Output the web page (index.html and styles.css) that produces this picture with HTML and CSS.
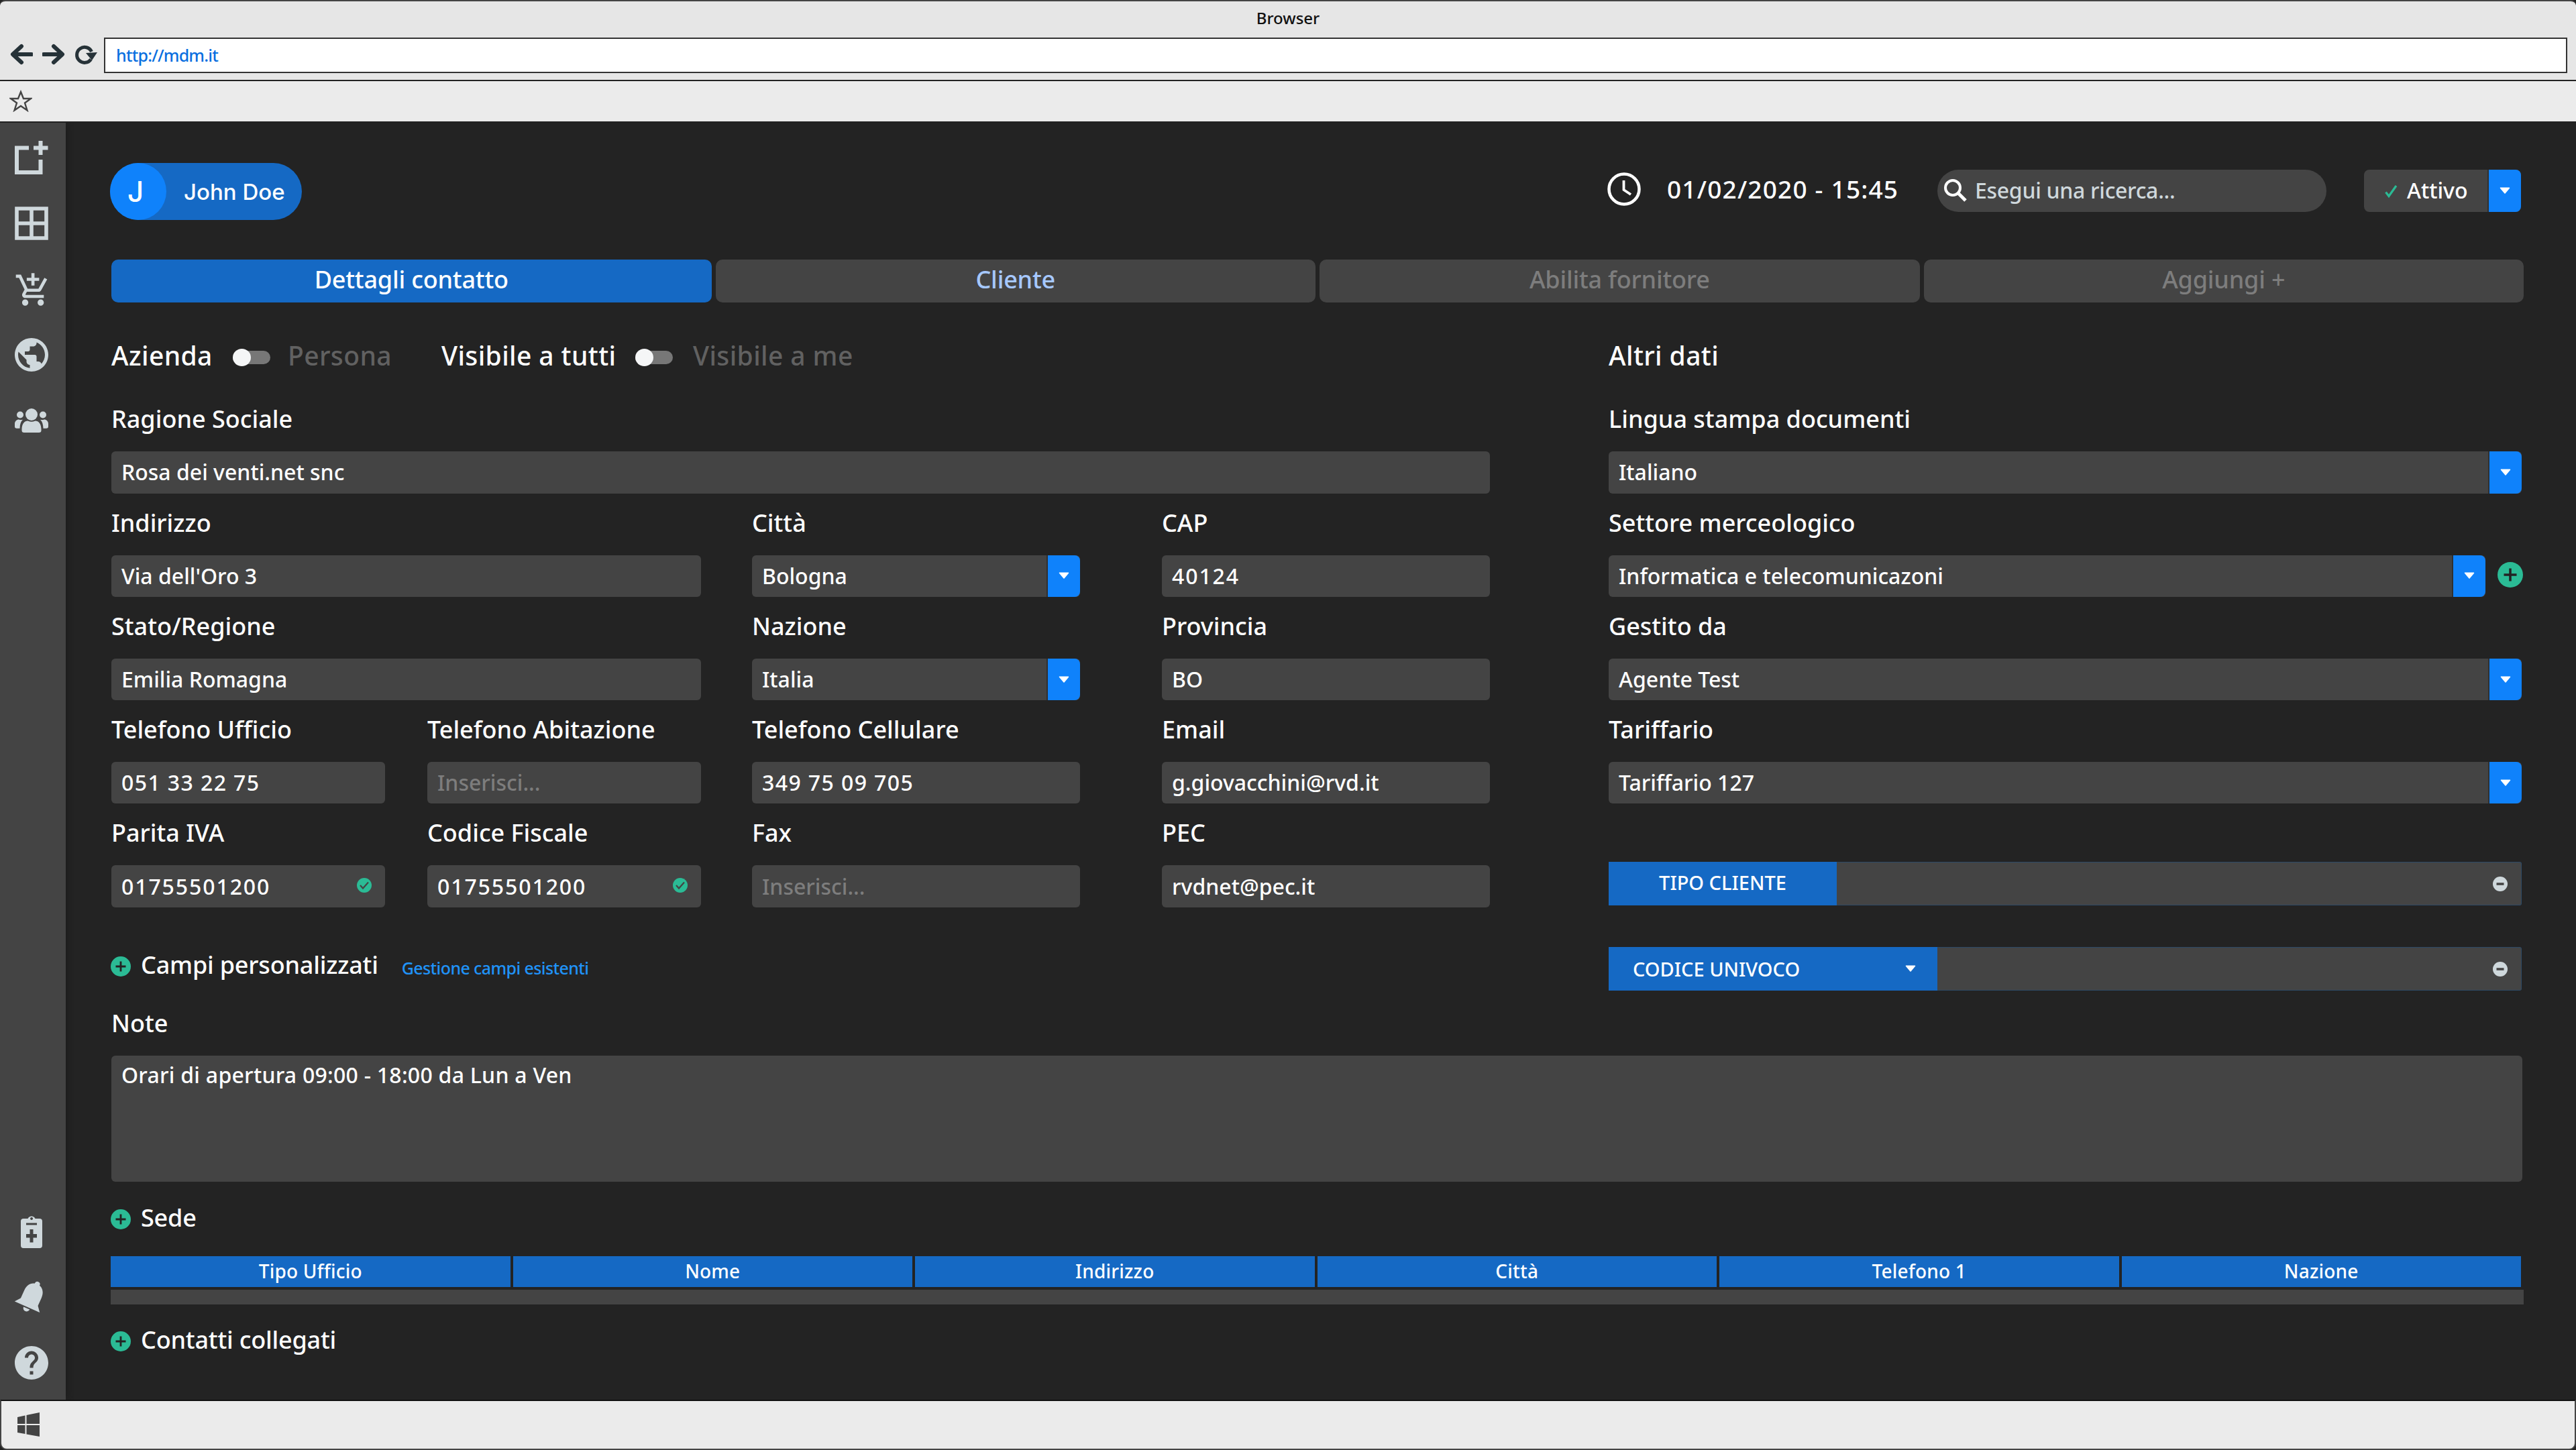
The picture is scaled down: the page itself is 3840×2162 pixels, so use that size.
FILE: index.html
```html
<!DOCTYPE html>
<html lang="it">
    <head>
        <meta charset="utf-8">
        <title>Browser</title>
        <link rel="stylesheet" href="styles.css">
    </head>
    <body>
        <!-- shared icons -->
        <svg class="defs">
            <symbol id="plus" viewBox="0 0 30 30">
                <circle cx="15" cy="15" r="15" fill="#2bbb95"/>
                <path d="M15 7.500v15M7.500 15h15" stroke="#232323" stroke-width="2.800"/>
            </symbol>
            <symbol id="ok" viewBox="0 0 22 22">
                <circle cx="11" cy="11" r="11" fill="#2bbb95"/>
                <path d="M5 11l4 4.500L17 6.500" stroke="#444" stroke-width="2.200" fill="none"/>
            </symbol>
            <symbol id="minus" viewBox="0 0 22 22">
                <circle cx="11" cy="11" r="11" fill="#cfd8dc"/>
                <path d="M5.500 11h11" stroke="#444" stroke-width="3.600"/>
            </symbol>
            <symbol id="down" viewBox="0 0 16 11">
                <path d="M1.500 1.200h13L8 9z" fill="#fff" stroke="#fff" stroke-width="1.500" stroke-linejoin="round"/>
            </symbol>
        </svg>

        <div class="titlebar">Browser</div>
        <div class="urlbar">
            <svg class="nav" viewBox="0 0 34 32"><path d="M17 4L4 16l13 12M5 16h27" stroke="#263238" stroke-width="6" fill="none" stroke-linecap="round" stroke-linejoin="round"/></svg>
            <svg class="nav" viewBox="0 0 34 32"><path d="M17 4l13 12-13 12M29 16H2" stroke="#263238" stroke-width="6" fill="none" stroke-linecap="round" stroke-linejoin="round"/></svg>
            <svg class="nav" viewBox="0 0 34 32"><path d="M24.500 23.500A11.500 11.500 0 1 1 25.500 12" stroke="#263238" stroke-width="5" fill="none"/><path d="M17 14l17-1-8 12z" fill="#263238"/></svg>
            <div class="url">http://mdm.it</div>
        </div>
        <div class="bookmarks">
            <svg class="star" viewBox="0 0 34 33"><path d="M17 3l4 10h11l-9 6.500 3.500 11L17 24l-9.500 6.500 3.500-11L2 13h11z" fill="none" stroke="#444" stroke-width="2.400"/></svg>
        </div>

        <div class="page">
            <div class="sidebar">
                <svg viewBox="0 0 50 50"><path d="M21 10.500H3V47h35.500V28M38.500 0v21M28 10.500h21.500" fill="none" stroke="#cfd8dc" stroke-width="6"/></svg>
                <svg viewBox="0 0 50 50"><path d="M3 3h44v44H3zM25 3v44M3 25h44" fill="none" stroke="#cfd8dc" stroke-width="5.600"/></svg>
                <svg viewBox="0 0 24 24"><path fill="#cfd8dc" d="M11 9h2V6h3V4h-3V1h-2v3H8v2h3v3zm-4 9c-1.100 0-1.990.9-1.990 2S5.900 22 7 22s2-.9 2-2-.9-2-2-2zm10 0c-1.100 0-1.990.9-1.990 2s.89 2 1.990 2 2-.9 2-2-.9-2-2-2zm-9.830-3.250l.03-.12.900-1.630h7.450c.75 0 1.410-.41 1.750-1.030l3.860-7.010L19.420 4h-.01l-1.100 2-2.760 5H8.530l-.13-.27L6.160 6l-.95-2-.94-2H1v2h2l3.600 7.590-1.350 2.450c-.16.280-.25.610-.25.960 0 1.100.9 2 2 2h12v-2H7.420c-.13 0-.25-.11-.25-.25z" transform="translate(-.3 -.5) scale(1.110)"/></svg>
                <svg viewBox="2 2 20 20"><path fill="#cfd8dc" d="M12 2C6.480 2 2 6.480 2 12s4.480 10 10 10 10-4.480 10-10S17.520 2 12 2zm-1 17.930c-3.950-.49-7-3.850-7-7.930 0-.62.080-1.210.210-1.790L9 15v1c0 1.100.9 2 2 2v1.930zm6.900-2.540c-.26-.81-1-1.390-1.900-1.390h-1v-3c0-.55-.45-1-1-1H8v-2h2c.55 0 1-.45 1-1V7h2c1.100 0 2-.9 2-2v-.41c2.930 1.190 5 4.060 5 7.410 0 2.080-.8 3.970-2.100 5.390z"/></svg>
                <svg viewBox="0 0 50 50" fill="#cfd8dc"><circle cx="25" cy="16" r="9"/><circle cx="8" cy="16.500" r="5"/><circle cx="42" cy="16.500" r="5"/><path d="M10.500 43V38c0-8 4-12.500 9-12.500q5.500 2.600 11 0c5 0 9 4.500 9 12.500v2q0 3-3.500 3H14q-3.500 0-3.500-3zM0 34v-4c0-4 3-6.500 6-6.500q3 1 6 .2c-3 2.800-4.300 7-4.500 13H3q-3 0-3-2.700zM50 34v-4c0-4-3-6.500-6-6.500q-3 1-6 .2c3 2.800 4.300 7 4.500 13H47q3 0 3-2.700z"/></svg>
                <div class="grow"></div>
                <svg viewBox="0 0 50 50"><path fill="#cfd8dc" fill-rule="evenodd" d="M13 6h6.500a6 6 0 0 1 11 0H37q4 0 4 4v36q0 4-4 4H13q-4 0-4-4V10q0-4 4-4zM25 4a2 2 0 1 0 .1 0zM17 12.500v3h16v-3zM22.500 22v7H17v5.500h5.500v7h5v-7H33V29h-5.500v-7z"/></svg>
                <svg viewBox="0 0 50 50"><g transform="rotate(24 25 25)" fill="#cfd8dc"><circle cx="25" cy="4" r="4"/><path d="M25 4c-9 0-14 7-14 16v13l-6.500 8H45.500L39 33V20c0-9-5-16-14-16z"/><path d="M20 43h10a5 5 0 0 1-10 0z"/></g></svg>
                <svg viewBox="2 2 20 20"><path fill="#cfd8dc" d="M12 2C6.480 2 2 6.480 2 12s4.480 10 10 10 10-4.480 10-10S17.520 2 12 2zm1 17h-2v-2h2v2zm2.070-7.750l-.9.920C13.450 12.900 13 13.500 13 15h-2v-.5c0-1.100.45-2.100 1.170-2.830l1.240-1.260c.37-.36.590-.86.590-1.410 0-1.100-.9-2-2-2s-2 .9-2 2H8c0-2.210 1.790-4 4-4s4 1.790 4 4c0 .88-.36 1.680-.93 2.250z"/></svg>
            </div>

            <div class="main">
                <div class="header">
                    <div class="user"><div class="avatar">J</div><span>John Doe</span></div>
                    <svg class="clock" viewBox="0 0 50 50"><circle cx="25" cy="25" r="22.500" fill="none" stroke="#fff" stroke-width="4.500"/><path d="M24.500 12v14l10.500 7" fill="none" stroke="#fff" stroke-width="3.800"/></svg>
                    <div class="date">01/02/2020 - 15:45</div>
                    <div class="search">
                        <svg viewBox="0 0 34 34"><circle cx="13" cy="13" r="11" fill="none" stroke="#fff" stroke-width="4"/><path d="M21 21l11 11" stroke="#fff" stroke-width="5"/></svg>
                        <span>Esegui una ricerca...</span>
                    </div>
                    <div class="status">
                        <svg viewBox="0 0 20 20"><path d="M1.500 11.500l4.500 6L17 2" fill="none" stroke="#2bbb95" stroke-width="3.200"/></svg>
                        <span>Attivo</span>
                        <div class="arrow"><svg><use href="#down"/></svg></div>
                    </div>
                </div>

                <div class="tabs">
                    <div class="tab active">Dettagli contatto</div>
                    <div class="tab link">Cliente</div>
                    <div class="tab">Abilita fornitore</div>
                    <div class="tab">Aggiungi +</div>
                </div>

                <div class="content">
                    <div class="left">
                        <div class="toggles">
                            <span class="azienda">Azienda</span><i class="toggle"></i><span class="off persona">Persona</span>
                            <span class="tutti">Visibile a tutti</span><i class="toggle"></i><span class="off me">Visibile a me</span>
                        </div>
                        <div class="form">
                            <div class="item full"><label>Ragione Sociale</label><div class="field">Rosa dei venti.net snc</div></div>

                            <div class="item wide"><label>Indirizzo</label><div class="field">Via dell'Oro 3</div></div>
                            <div class="item c3"><label>Città</label><div class="field">Bologna<div class="arrow"><svg><use href="#down"/></svg></div></div></div>
                            <div class="item c4"><label>CAP</label><div class="field num">40124</div></div>

                            <div class="item wide"><label>Stato/Regione</label><div class="field">Emilia Romagna</div></div>
                            <div class="item c3"><label>Nazione</label><div class="field">Italia<div class="arrow"><svg><use href="#down"/></svg></div></div></div>
                            <div class="item c4"><label>Provincia</label><div class="field">BO</div></div>

                            <div class="item c1"><label>Telefono Ufficio</label><div class="field num phone">051 33 22 75</div></div>
                            <div class="item c2"><label>Telefono Abitazione</label><div class="field empty">Inserisci...</div></div>
                            <div class="item c3"><label>Telefono Cellulare</label><div class="field num phone">349 75 09 705</div></div>
                            <div class="item c4"><label>Email</label><div class="field">g.giovacchini@rvd.it</div></div>

                            <div class="item c1"><label>Parita IVA</label><div class="field num">01755501200<svg class="ok"><use href="#ok"/></svg></div></div>
                            <div class="item c2"><label>Codice Fiscale</label><div class="field num">01755501200<svg class="ok"><use href="#ok"/></svg></div></div>
                            <div class="item c3"><label>Fax</label><div class="field empty">Inserisci...</div></div>
                            <div class="item c4"><label>PEC</label><div class="field">rvdnet@pec.it</div></div>
                        </div>
                        <div class="section campi">
                            <svg><use href="#plus"/></svg><span>Campi personalizzati</span>
                            <a class="manage">Gestione campi esistenti</a>
                        </div>
                        <label>Note</label>
                    </div>

                    <div class="right">
                        <div class="toggles">Altri dati</div>
                        <div class="item"><label>Lingua stampa documenti</label><div class="field">Italiano<div class="arrow"><svg><use href="#down"/></svg></div></div></div>
                        <div class="item"><label>Settore merceologico</label>
                            <div class="addrow">
                                <div class="field">Informatica e telecomunicazoni<div class="arrow"><svg><use href="#down"/></svg></div></div>
                                <svg class="add"><use href="#plus"/></svg>
                            </div>
                        </div>
                        <div class="item"><label>Gestito da</label><div class="field">Agente Test<div class="arrow"><svg><use href="#down"/></svg></div></div></div>
                        <div class="item"><label>Tariffario</label><div class="field">Tariffario 127<div class="arrow"><svg><use href="#down"/></svg></div></div></div>
                        <div class="tag tipo"><div class="tagname">TIPO CLIENTE</div><svg class="minus"><use href="#minus"/></svg></div>
                        <div class="tag codice"><div class="tagname">CODICE UNIVOCO<svg class="tri"><use href="#down"/></svg></div><svg class="minus"><use href="#minus"/></svg></div>
                    </div>
                </div>

                <div class="notes">Orari di apertura 09:00 - 18:00 da Lun a Ven</div>

                <div class="section sede"><svg><use href="#plus"/></svg><span>Sede</span></div>
                <div class="table">
                    <div>Tipo Ufficio</div><div>Nome</div><div>Indirizzo</div><div>Città</div><div>Telefono 1</div><div>Nazione</div>
                </div>
                <div class="emptyrow"></div>
                <div class="section contatti"><svg><use href="#plus"/></svg><span>Contatti collegati</span></div>
            </div>
        </div>

        <div class="taskbar">
            <svg viewBox="0 0 33 36" fill="#444"><path d="M0 7l11.500-2.500V17H0zM13.500 4L33 0v17H13.500zM0 19h11.500v13L0 30zM13.500 19H33v17l-19.500-3.600z"/></svg>
        </div>
    </body>
</html>
```

FILE: styles.css
```css
*{
    box-sizing: border-box;
}
body{
    margin: 0;
    width: 3840px;
    height: 2162px;
    display: flex;
    flex-direction: column;
    overflow: hidden;
    background: #232323;
    color: #fff;
    font-family: "Noto Sans", sans-serif;
    font-weight: 500;
}
svg{
    display: block;
    flex: none;
}
.defs{
    position: absolute;
    width: 0;
    height: 0;
}

/* browser */
.titlebar{
    height: 56px;
    background: #e6e6e6;
    border-top: 2px solid #444;
    border-radius: 8px 8px 0 0;
    color: #111;
    font-size: 24px;
    line-height: 50px;
    text-align: center;
}
.urlbar{
    height: 65px;
    display: flex;
    align-items: flex-start;
    gap: 14px;
    padding: 0 13px 0 15px;
    background: #e6e6e6;
    border-bottom: 2px solid #222;
}
.nav{
    width: 34px;
    height: 32px;
    margin-top: 9px;
}
.url{
    flex: 1;
    height: 53px;
    margin-left: -4px;
    padding-left: 16px;
    background: #fff;
    border: 2px solid #333;
    color: #0a6fe0;
    font-size: 25px;
    letter-spacing: -0.8px;
    line-height: 49px;
}
.bookmarks{
    height: 62px;
    padding: 13px 14px;
    background: #ebebeb;
    border-bottom: 2px solid #222;
}
.star{
    width: 34px;
    height: 33px;
}
.taskbar{
    height: 75px;
    padding: 17px 24px;
    background: #ebebeb;
    border: 2px solid #444;
    border-top-color: #111;
    border-radius: 0 0 10px 10px;
}
.taskbar svg{
    width: 33px;
    height: 36px;
}

/* page */
.page{
    flex: 1;
    display: flex;
    min-height: 0;
}
.sidebar{
    width: 98px;
    display: flex;
    flex-direction: column;
    align-items: center;
    gap: 48px;
    padding: 27px 5px 30px 0;
    background: #444;
    box-shadow: 0 0 12px #1a1a1a;
    clip-path: inset(0 -12px 0 0);
}
.sidebar svg{
    width: 50px;
    height: 50px;
}
.grow{
    flex: 1;
}
.main{
    flex: 1;
    padding: 60px 78px 0 68px;
}
.header{
    display: flex;
    align-items: center;
    height: 85px;
    padding-right: 4px;
    margin-left: -2px;
}
.user{
    display: flex;
    align-items: center;
    width: 286px;
    height: 85px;
    background: #1569c4;
    border-radius: 43px;
    font-family: "Inter", sans-serif;
    font-size: 33px;
    margin-right: auto;
}
.avatar{
    width: 84px;
    height: 85px;
    margin-right: 26px;
    padding-right: 8px;
    background: #0f82fb;
    border-radius: 50%;
    font-size: 42px;
    line-height: 85px;
    text-align: center;
}
.clock{
    width: 50px;
    height: 50px;
    margin: -8px 39px 0 0;
}
.date{
    width: 403px;
    margin-top: -9px;
    font-size: 37px;
    letter-spacing: 1.2px;
    white-space: nowrap;
}
.search{
    display: flex;
    align-items: center;
    gap: 12px;
    width: 580px;
    height: 63px;
    margin: -2px 56px 0 0;
    padding: 0 0 2px 10px;
    background: #444;
    border-radius: 32px;
    color: #cfd8dc;
    font-size: 32px;
    letter-spacing: -0.3px;
}
.search svg{
    width: 34px;
    height: 34px;
}
.status{
    display: flex;
    align-items: center;
    width: 234px;
    height: 63px;
    margin-top: -2px;
    padding-left: 31px;
    background: #444;
    border-radius: 8px;
    font-size: 32px;
}
.status > svg{
    width: 20px;
    height: 20px;
    margin-right: 13px;
}
.status span{
    padding-bottom: 2px;
}
.arrow{
    display: flex;
    align-items: center;
    justify-content: center;
    width: 50px;
    height: 100%;
    margin-left: auto;
    background: #0f82fb;
    border-left: 2px solid #303030;
    border-radius: 0 8px 8px 0;
}
.arrow svg{
    width: 16px;
    height: 11px;
}
.tabs{
    display: grid;
    grid-template-columns: repeat(4, 1fr);
    gap: 6px;
    margin-top: 59px;
    width: 3596px;
}
.tab{
    height: 64px;
    background: #444;
    border-radius: 10px;
    color: #7d7d7d;
    font-size: 36px;
    letter-spacing: -0.2px;
    line-height: 60px;
    text-align: center;
}
.tab.active{
    background: #1569c4;
    color: #fff;
}
.tab.link{
    color: #a6c8ff;
}

/* form */
.content{
    display: flex;
    gap: 177px;
}
.left{
    width: 2055px;
}
.right{
    width: 1361px;
}
.toggles{
    display: flex;
    align-items: center;
    height: 130.3px;
    padding-top: 28px;
    font-size: 39px;
    letter-spacing: 0.4px;
    line-height: 102px;
    white-space: nowrap;
}
.toggle{
    width: 56px;
    height: 20px;
    margin-right: 26px;
    margin-top: 5px;
    border-radius: 10px;
    background: #777;
}
.toggle::before{
    content: "";
    display: block;
    width: 27px;
    height: 26px;
    margin-top: -3px;
    border-radius: 50%;
    background: #f5f6f7;
}
.azienda{
    width: 181px;
}
.persona{
    width: 229px;
}
.tutti{
    width: 289px;
}
.off{
    color: #616161;
}
.me{
    margin-left: 4px;
}
.form{
    display: grid;
    grid-template-columns: 408px 63px 408px 76px 489px 122px 489px;
}
.full{
    grid-column: 1 / 8;
}
.wide{
    grid-column: 1 / 4;
}
.c1{
    grid-column: 1;
}
.c2{
    grid-column: 3;
}
.c3{
    grid-column: 5;
}
.c4{
    grid-column: 7;
}
label{
    display: block;
    height: 92px;
    font-size: 36px;
    line-height: 87px;
    white-space: nowrap;
}
.field{
    flex: 1;
    display: flex;
    align-items: center;
    height: 62.3px;
    padding-left: 15px;
    background: #444;
    border-radius: 6px;
    font-size: 32px;
    line-height: 44px;
    white-space: nowrap;
}
.num{
    letter-spacing: 1.9px;
}
.phone{
    letter-spacing: 1.4px;
}
.empty{
    color: #7d7d7d;
}
.ok{
    width: 22px;
    height: 22px;
    margin: -4px 20px 0 auto;
}
.addrow{
    display: flex;
}
.add{
    width: 38px;
    height: 38px;
    margin: 10px -2px 0 18px;
}
.tag{
    display: flex;
    align-items: center;
    justify-content: space-between;
    height: 65px;
    padding-right: 20px;
    background: #444;
    border: 1px solid #2d4a66;
    border-left: 0;
    border-radius: 3px;
    font-size: 29px;
}
.tagname{
    height: 65px;
    background: #1569c4;
    line-height: 62px;
}
.tipo{
    margin-top: 87px;
}
.tipo .tagname{
    width: 340px;
    text-align: center;
}
.codice{
    margin-top: 62px;
}
.codice .tagname{
    display: flex;
    justify-content: space-between;
    align-items: center;
    width: 490px;
    padding: 0 32px 0 36px;
}
.tri{
    width: 16px;
    height: 11px;
}
.minus{
    width: 22px;
    height: 22px;
}
.section{
    display: flex;
    height: 60px;
    margin-left: -1px;
    font-size: 36px;
    letter-spacing: -0.2px;
    line-height: 62px;
    white-space: nowrap;
}
.section svg{
    width: 30px;
    height: 30px;
    margin: 18px 15px 0 0;
}
.campi{
    margin: 55px 0 14px -1px;
}
.manage{
    margin-left: 35px;
    color: #2093f8;
    font-size: 25px;
    letter-spacing: -0.6px;
    line-height: 70px;
}
.notes{
    width: 3594px;
    height: 188px;
    padding: 4px 15px;
    background: #444;
    border-radius: 6px;
    font-size: 32px;
    letter-spacing: 0.25px;
    line-height: 50px;
}
.sede{
    margin-top: 23px;
}
.table{
    display: grid;
    grid-template-columns: repeat(6, 1fr);
    gap: 4px;
    width: 3593px;
    margin: 28px 0 4px -1px;
    font-size: 28px;
    letter-spacing: 0.2px;
    line-height: 45px;
    text-align: center;
}
.table div{
    height: 46px;
    background: #1569c4;
}
.emptyrow{
    width: 3597px;
    height: 22px;
    margin-left: -1px;
    background: #444;
}
.contatti{
    margin-top: 22px;
}
```
